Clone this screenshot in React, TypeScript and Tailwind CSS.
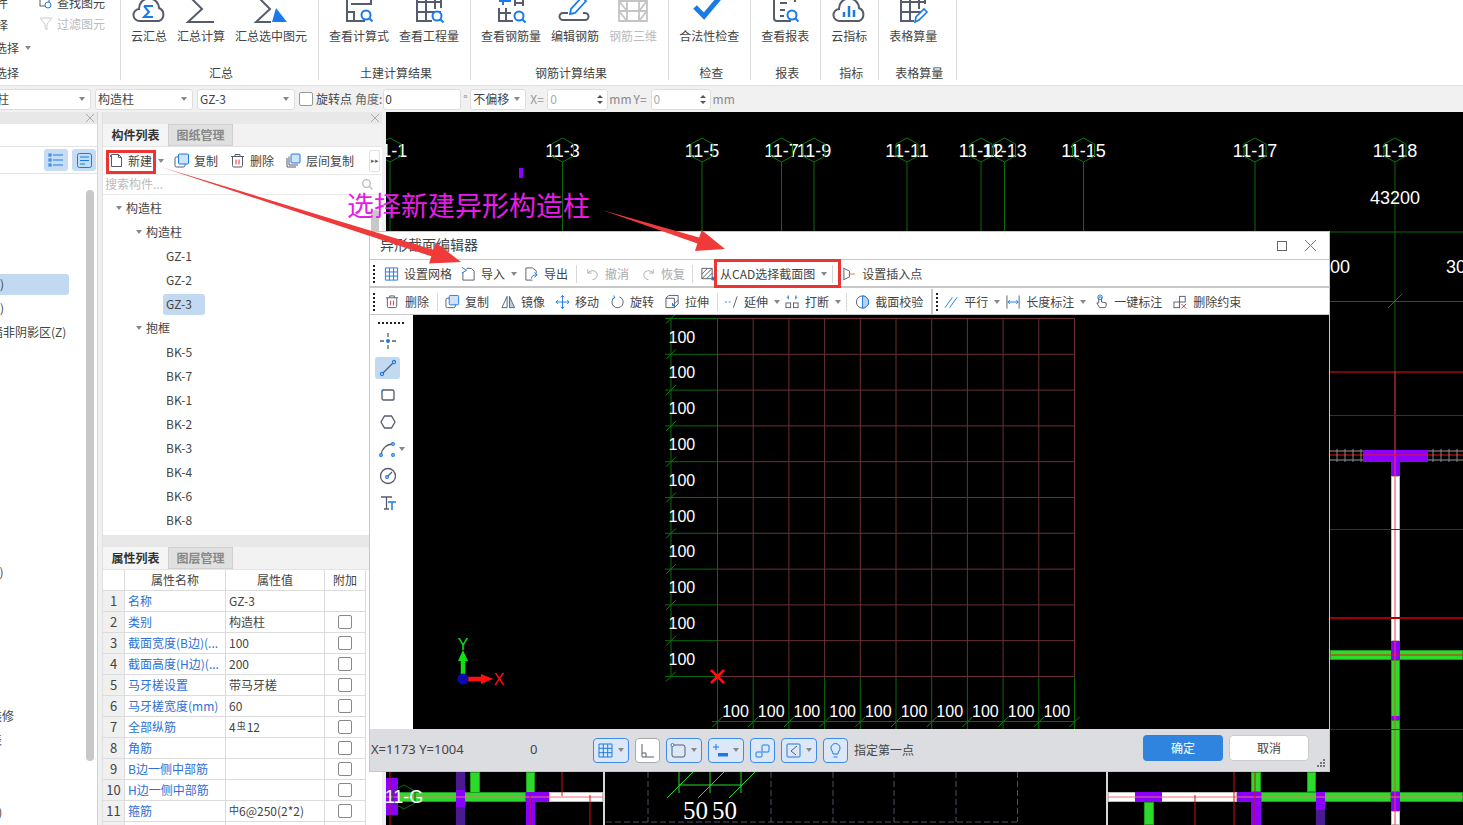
import type { ReactNode } from 'react';

const GRAY = '#565c6c';
const BLUE = '#1a7ae8';

function Caret({ className = '' }: { className?: string }) {
  return (
    <span
      className={`inline-block w-0 h-0 shrink-0 border-x-[3px] border-t-[4px] border-x-transparent border-t-[#888] ${className}`}
    />
  );
}

function Grip({ className = '' }: { className?: string }) {
  return (
    <div className={`flex flex-col gap-[2px] w-[2px] shrink-0 ${className}`}>
      {[0, 1, 2, 3, 4].map((i) => (
        <span key={i} className="block w-[2px] h-[2px] bg-[#222]" />
      ))}
    </div>
  );
}

function Mag({ x, y }: { x: number; y: number }) {
  return (
    <g fill="none" stroke={BLUE} strokeWidth="2">
      <circle cx={x} cy={y} r="4.5" fill="#fff" />
      <path d={`M${x + 3} ${y + 3}l3.5 3.5`} />
    </g>
  );
}

function Cloud() {
  return (
    <path
      d="M9 21a6 6 0 0 1-1-12 10 10 0 0 1 20-1 7 7 0 0 1 0 13z"
      fill="none"
      stroke={GRAY}
      strokeWidth="2"
    />
  );
}

const ribbonIcons: Record<string, ReactNode> = {
  cloudSum: (
    <>
      <Cloud />
      <path d="M13 6h9M13 6l5 6-5 5h9" fill="none" stroke={BLUE} strokeWidth="2" />
    </>
  ),
  sum: <path d="M6 -4h24M6 -4l13 13L5 22h26" fill="none" stroke={GRAY} strokeWidth="2" />,
  sumSel: (
    <>
      <path d="M4 -4h20M4 -4l13 13L3 22h15" fill="none" stroke={GRAY} strokeWidth="2" />
      <path d="M23 8l11 14H19z" fill={BLUE} />
    </>
  ),
  calc: (
    <>
      <path d="M6 -4v25h18" fill="none" stroke={GRAY} strokeWidth="2" />
      <path d="M6 12h7v9" fill="none" stroke={GRAY} strokeWidth="2" />
      <path d="M12 4h16" stroke={BLUE} strokeWidth="2" strokeDasharray="3 2" />
      <path d="M30 -4v8H10" fill="none" stroke={GRAY} strokeWidth="2" />
      <Mag x={25} y={15} />
    </>
  ),
  table: (
    <>
      <path d="M6 -4v25h15M6 12h24M6 2h24M15 -4v25M24 -4v13M30 -4v12" fill="none" stroke={GRAY} strokeWidth="2" />
      <Mag x={26} y={16} />
    </>
  ),
  rebar: (
    <>
      <path d="M6 8v13h14M6 13h12M13 8v13M22 -4v10M30 -4v10M22 3h8" fill="none" stroke={GRAY} strokeWidth="2" />
      <path d="M6 1h12M10 -4v9" fill="none" stroke={BLUE} strokeWidth="2" />
      <Mag x={26} y={16} />
    </>
  ),
  edit: (
    <>
      <path d="M11 13H6a3.500 3.500 0 0 0 0 7h22a3.500 3.500 0 0 0 0-7h-2" fill="none" stroke={GRAY} strokeWidth="2" />
      <path d="M13 14l1-5 11-12 4 4-11 12z" fill="#fff" stroke={BLUE} strokeWidth="1.800" />
    </>
  ),
  ladder: (
    <path
      d="M4 -4v26M32 -4v26M12 -4v26M24 -4v26M4 1h28M4 11h28M4 21h28M4 1l8 10M32 1l-8 10M4 11l8 10M32 11l-8 10"
      fill="none"
      stroke="#c4c4c4"
      strokeWidth="1.800"
    />
  ),
  check: <path d="M4 7l9 9L30 -4" fill="none" stroke={BLUE} strokeWidth="5" />,
  report: (
    <>
      <path d="M7 -4v22a3 3 0 0 0 3 3h14M28 -4v6" fill="none" stroke={GRAY} strokeWidth="2" />
      <path d="M13 3h7M13 10h5M13 16h4" stroke={GRAY} strokeWidth="2" />
      <Mag x={25} y={15} />
    </>
  ),
  cloudBars: (
    <>
      <Cloud />
      <path d="M13 12v5M18 6v11M23 10v7" stroke={BLUE} strokeWidth="2.500" />
    </>
  ),
  tablePen: (
    <>
      <path d="M6 -4v25h13M6 12h20M6 2h24M15 -4v25M24 -4v13M30 -4v8" fill="none" stroke={GRAY} strokeWidth="2" />
      <path d="M20 22l1-5 8-8 3 3-8 8z" fill="#fff" stroke={BLUE} strokeWidth="1.600" />
    </>
  ),
};

const ribbonGroups = [
  {
    label: '汇总',
    shift: 'translate-x-[2px]',
    pad: 'pr-[11px]',
    items: [
      { icon: 'cloudSum', label: '云汇总' },
      { icon: 'sum', label: '汇总计算' },
      { icon: 'sumSel', label: '汇总选中图元' },
    ],
  },
  {
    label: '土建计算结果',
    shift: 'translate-x-[2px]',
    pad: 'pr-[11px]',
    items: [
      { icon: 'calc', label: '查看计算式' },
      { icon: 'table', label: '查看工程量' },
    ],
  },
  {
    label: '钢筋计算结果',
    shift: 'translate-x-[2px]',
    pad: 'pr-[11px]',
    items: [
      { icon: 'rebar', label: '查看钢筋量' },
      { icon: 'edit', label: '编辑钢筋' },
      { icon: 'ladder', label: '钢筋三维', disabled: true },
    ],
  },
  { label: '检查', shift: 'translate-x-[2px]', pad: 'pr-[11px]', items: [{ icon: 'check', label: '合法性检查' }] },
  { label: '报表', shift: 'translate-x-[2px]', pad: 'pr-[11px]', items: [{ icon: 'report', label: '查看报表' }] },
  { label: '指标', shift: 'translate-x-[2px]', pad: 'pr-[11px]', items: [{ icon: 'cloudBars', label: '云指标' }] },
  { label: '表格算量', shift: 'translate-x-[6px]', pad: 'pr-[19px]', items: [{ icon: 'tablePen', label: '表格算量' }] },
];

function Ribbon() {
  return (
    <div className="h-[85px] bg-white flex items-start overflow-hidden shrink-0">
      <div className="w-[121px] h-[80px] border-r border-[#dcdcdc] shrink-0 flex flex-col overflow-hidden">
        <div className="flex h-[66px]">
          <div className="w-[39px] shrink-0 leading-[16px]">
            <div className="-ml-[4px] mt-[-5px] h-[22px] whitespace-nowrap">件</div>
            <div className="-ml-[4px] h-[23px] whitespace-nowrap">择</div>
            <div className="-ml-[5px] flex items-center gap-[6px] whitespace-nowrap">
              选择
              <Caret />
            </div>
          </div>
          <div className="leading-[16px]">
            <div className="flex items-center gap-[4px] mt-[-8px] h-[21px]">
              <svg width="14" height="14" viewBox="0 0 14 14" fill="none">
                <rect x="1" y="1" width="9" height="9" stroke={GRAY} />
                <circle cx="9" cy="9" r="3" stroke={BLUE} fill="#fff" />
              </svg>
              <span>查找图元</span>
            </div>
            <div className="flex items-center gap-[4px] text-[#bbb] h-[21px]">
              <svg width="14" height="14" viewBox="0 0 14 14" fill="none" stroke="#ccc">
                <path d="M1 1h12L8 7v6L6 11V7z" />
              </svg>
              <span>过滤图元</span>
            </div>
          </div>
        </div>
        <div className="h-[13px] leading-[13px] -ml-[5px] whitespace-nowrap">选择</div>
      </div>
      {ribbonGroups.map((group) => (
        <div key={group.label} className={`h-[80px] border-r border-[#dcdcdc] flex flex-col items-center pl-[10px] shrink-0 ${group.pad}`}>
          <div className="flex gap-[10px] h-[66px]">
            {group.items.map((item) => (
              <div key={item.label} className="flex flex-col items-center">
                <svg width="36" height="23" viewBox="0 0 36 23">
                  {ribbonIcons[item.icon]}
                </svg>
                <span className={`mt-[5px] leading-[16px] whitespace-nowrap ${item.disabled ? 'text-[#bbb]' : ''}`}>
                  {item.label}
                </span>
              </div>
            ))}
          </div>
          <div className={`h-[13px] leading-[13px] whitespace-nowrap ${group.shift}`}>{group.label}</div>
        </div>
      ))}
    </div>
  );
}

function SelectBox({ text, className }: { text: string; className: string }) {
  return (
    <div className={`h-[21px] shrink-0 bg-white border border-[#dedede] rounded-[3px] flex items-center justify-between pr-[5px] ${className}`}>
      <span className="whitespace-nowrap leading-[17px] pb-[2px]">{text}</span>
      <Caret className="border-t-[#555]" />
    </div>
  );
}

function SpinBox({ className }: { className: string }) {
  return (
    <div className={`h-[21px] shrink-0 bg-white border border-[#dedede] rounded-[3px] flex items-center justify-between pl-[2px] pr-[4px] text-[#aaa] ${className}`}>
      <span className="leading-[17px] pb-[2px]">0</span>
      <div className="flex flex-col gap-[3px]">
        <span className="w-0 h-0 border-x-[3px] border-b-[3px] border-x-transparent border-b-[#555]" />
        <span className="w-0 h-0 border-x-[3px] border-t-[3px] border-x-transparent border-t-[#555]" />
      </div>
    </div>
  );
}

function OptionBar() {
  return (
    <div className="h-[27px] bg-[#f1f1f1] border-t border-[#e0e0e0] flex items-center shrink-0 overflow-hidden">
      <SelectBox text="柱" className="-ml-[20px] w-[111px] pl-[16px]" />
      <SelectBox text="构造柱" className="ml-[4px] w-[98px] pl-[2px]" />
      <SelectBox text="GZ-3" className="ml-[4px] w-[98px] pl-[2px]" />
      <span className="ml-[4px] w-[14px] h-[14px] bg-white border border-[#999] rounded-[2px] shrink-0" />
      <span className="ml-[3px] shrink-0 pb-[1px]">旋转点</span>
      <span className="ml-[3px] shrink-0 text-[#666] pb-[1px]">角度:</span>
      <div className="ml-[1px] w-[78px] h-[21px] bg-white border border-[#dedede] rounded-[3px] pl-[1px] leading-[17px] shrink-0">0</div>
      <span className="ml-[2px] w-[7px] text-[#888] shrink-0">°</span>
      <SelectBox text="不偏移" className="w-[56px] pl-[2px]" />
      <span className="ml-[4px] text-[#999] w-[17px] shrink-0 pb-[1px]">X=</span>
      <SpinBox className="w-[61px]" />
      <span className="ml-[1px] text-[#888] shrink-0 pb-[1px]">mm</span>
      <span className="ml-[2px] text-[#888] w-[17px] shrink-0 pb-[1px]">Y=</span>
      <SpinBox className="w-[60px]" />
      <span className="ml-[2px] text-[#888] shrink-0 pb-[1px]">mm</span>
    </div>
  );
}

const leftRows: Record<number, { text: string; offset: string; active?: boolean }> = {
  4: { text: '柱)', offset: '-ml-[12px]', active: true },
  5: { text: '柱)', offset: '-ml-[12px]' },
  6: { text: '墙非阴影区(Z)', offset: '-ml-[9px]' },
  16: { text: '(Y)', offset: '-ml-[11px]' },
  22: { text: '装修', offset: '-ml-[10px]' },
  23: { text: '表', offset: '-ml-[10px]' },
  26: { text: '(Z)', offset: '-ml-[13px]' },
};

function PanelBar() {
  return (
    <div className="h-[12px] bg-[#e8e8e8] flex items-center justify-end pr-[3px] shrink-0">
      <svg width="8" height="8" viewBox="0 0 8 8" stroke="#aaa">
        <path d="M0 0l8 8M8 0L0 8" />
      </svg>
    </div>
  );
}

function LeftPanel() {
  return (
    <div className="w-[98px] shrink-0 bg-white border-r border-[#d4d4d4] flex flex-col overflow-hidden">
      <PanelBar />
      <div className="h-[23px] border-b border-[#e4e4e4] shrink-0" />
      <div className="h-[27px] border-b border-[#e4e4e4] flex items-center justify-end gap-[4px] pr-[1px] shrink-0">
        <div className="w-[24px] h-[22px] rounded-[3px] bg-[#c5dcf3] flex items-center justify-center">
          <svg width="16" height="14" viewBox="0 0 16 14" stroke={BLUE} fill="none">
            <path d="M5 2h10M5 7h10M5 12h10" />
            <rect x="1" y="1" width="2" height="2" />
            <rect x="1" y="6" width="2" height="2" />
            <rect x="1" y="11" width="2" height="2" />
          </svg>
        </div>
        <div className="w-[24px] h-[22px] rounded-[3px] bg-[#c5dcf3] flex items-center justify-center">
          <svg width="15" height="15" viewBox="0 0 15 15" stroke={BLUE} fill="none">
            <rect x="0.500" y="0.500" width="14" height="14" rx="2" />
            <path d="M3 4h9M3 7.500h9M3 11h5" />
          </svg>
        </div>
      </div>
      <div className="flex flex-1 pt-[2px] min-h-0">
        <div className="w-[86px] shrink-0 overflow-hidden">
          {Array.from({ length: 27 }, (_, i) => {
            const row = leftRows[i];
            return (
              <div key={i} className="h-[24px] flex items-center">
                {row && (
                  <div className={`h-[21px] w-[69px] leading-[20px] whitespace-nowrap rounded-r-[3px] ${row.active ? 'bg-[#c2d9f2]' : ''}`}>
                    <span className={`inline-block ${row.offset}`}>{row.text}</span>
                  </div>
                )}
              </div>
            );
          })}
        </div>
        <div className="w-[8px] h-[571px] mt-[14px] bg-[#c8c8c8] rounded-[4px] shrink-0" />
      </div>
    </div>
  );
}

function DocIcon() {
  return (
    <svg width="15" height="15" viewBox="0 0 15 15" fill="none" stroke={GRAY} className="shrink-0">
      <path d="M2.500 1.500h7l3 3v9h-10z" />
      <path d="M9.500 1.500v3h3" />
      <path d="M1 2l2 2M3 2L1 4" stroke={BLUE} />
    </svg>
  );
}

function CopyIcon() {
  return (
    <svg width="15" height="15" viewBox="0 0 15 15" fill="none" className="shrink-0">
      <rect x="1" y="4" width="10" height="10" rx="1.500" stroke={GRAY} />
      <rect x="4.500" y="1" width="10" height="10" rx="1" fill="#cfe2f8" stroke={BLUE} />
    </svg>
  );
}

function TrashIcon() {
  return (
    <svg width="15" height="15" viewBox="0 0 15 15" fill="none" className="shrink-0">
      <path d="M1 3.500h13M5 3.500V1.500h5v2M2.500 3.500v9a1.500 1.500 0 0 0 1.500 1.500h7a1.500 1.500 0 0 0 1.500-1.500v-9" stroke={GRAY} />
      <path d="M6 6.500v5M9 6.500v5" stroke="#e03030" />
    </svg>
  );
}

function LayerCopyIcon() {
  return (
    <svg width="15" height="15" viewBox="0 0 15 15" fill="none" className="shrink-0">
      <path d="M1 5v9h9M3 3.500v8.500h9" stroke={GRAY} />
      <rect x="5" y="1" width="9" height="9" rx="1" fill="#cfe2f8" stroke={BLUE} />
    </svg>
  );
}

const treeRows = [
  { text: '构造柱', level: 1 },
  { text: '构造柱', level: 2 },
  { text: 'GZ-1', level: 3 },
  { text: 'GZ-2', level: 3 },
  { text: 'GZ-3', level: 3, active: true },
  { text: '抱框', level: 2 },
  { text: 'BK-5', level: 3 },
  { text: 'BK-7', level: 3 },
  { text: 'BK-1', level: 3 },
  { text: 'BK-2', level: 3 },
  { text: 'BK-3', level: 3 },
  { text: 'BK-4', level: 3 },
  { text: 'BK-6', level: 3 },
  { text: 'BK-8', level: 3 },
];

function Tabs({ first, second }: { first: string; second: string }) {
  return (
    <div className="h-[23px] flex bg-[#f2f2f2] shrink-0 border-b border-[#e4e4e4]">
      <div className="w-[65px] text-center font-bold leading-[22px] bg-[#f5f5f5] text-[#333]">{first}</div>
      <div className="w-[65px] text-center leading-[20px] bg-[#e0e0e0] border border-[#d0d0d0] text-[#888] font-bold">{second}</div>
    </div>
  );
}

const props = [
  ['名称', 'GZ-3', false],
  ['类别', '构造柱', true],
  ['截面宽度(B边)(...', '100', true],
  ['截面高度(H边)(...', '200', true],
  ['马牙槎设置', '带马牙槎', true],
  ['马牙槎宽度(mm)', '60', true],
  ['全部纵筋', 'bar', true],
  ['角筋', '', true],
  ['B边一侧中部筋', '', true],
  ['H边一侧中部筋', '', true],
  ['箍筋', 'stirrup', true],
  ['', '', false],
] as const;

function valueCell(value: string) {
  if (value === 'bar') {
    return (
      <>
        4<span className="text-[9px] relative -top-[3px] mx-[1px]">虫</span>12
      </>
    );
  }
  if (value === 'stirrup') {
    return (
      <>
        <span className="text-[10px] relative -top-[2px]">中</span>6@250(2*2)
      </>
    );
  }
  return value;
}

function MiddlePanel() {
  return (
    <div className="w-[280px] ml-[4px] shrink-0 bg-white flex flex-col overflow-hidden border-l border-[#e0e0e0]">
      <PanelBar />
      <Tabs first="构件列表" second="图纸管理" />
      <div className="h-[28px] flex items-center border-b border-[#eaeaea] shrink-0 whitespace-nowrap">
        <span className="ml-[6px] shrink-0"><DocIcon /></span>
        <span className="ml-[4px] shrink-0">新建</span>
        <Caret className="ml-[6px]" />
        <span className="ml-[10px] shrink-0"><CopyIcon /></span>
        <span className="ml-[5px] shrink-0">复制</span>
        <span className="ml-[12px] shrink-0"><TrashIcon /></span>
        <span className="ml-[5px] shrink-0">删除</span>
        <span className="ml-[12px] shrink-0"><LayerCopyIcon /></span>
        <span className="ml-[5px] shrink-0">层间复制</span>
        <div className="ml-[15px] w-[11px] h-[22px] shrink-0 border border-[#e0e0e0] rounded-[2px] flex items-center justify-center text-[7px] text-[#666]">▸▸</div>
      </div>
      <div className="h-[20px] flex items-center justify-between pl-[2px] pr-[9px] pb-[1px] text-[#bbb] border-b border-[#eaeaea] shrink-0">
        <span>搜索构件...</span>
        <svg width="11" height="11" viewBox="0 0 11 11" fill="none" stroke="#bbb" strokeWidth="1.300">
          <circle cx="4.500" cy="4.500" r="3.800" />
          <path d="M7.500 7.500l3 3" />
        </svg>
      </div>
      <div className="h-[340px] flex shrink-0 overflow-hidden">
        <div className="w-[268px] pt-[1px]">
          {treeRows.map((row, i) => (
            <div key={i} className="h-[24px] flex items-center">
              {row.level === 1 && <Caret className="ml-[13px] mr-[4px]" />}
              {row.level === 2 && <Caret className="ml-[33px] mr-[4px]" />}
              {row.level === 3 && (
                <span className={`ml-[60px] pl-[3px] h-[21px] w-[42px] leading-[19px] rounded-[3px] ${row.active ? 'bg-[#c2d9f2]' : ''}`}>
                  {row.text}
                </span>
              )}
              {row.level !== 3 && <span>{row.text}</span>}
            </div>
          ))}
        </div>
        <div className="w-[8px] h-[120px] mt-[15px] bg-[#c8c8c8] rounded-[4px]" />
      </div>
      <PanelBar />
      <Tabs first="属性列表" second="图层管理" />
      <div className="w-[263px] shrink-0 grid grid-cols-[22px_101px_99px_41px] auto-rows-[21px] text-[12px]">
        <div className="border-r border-b border-[#dcdcdc]" />
        <div className="border-r border-b border-[#dcdcdc] text-center leading-[20px]">属性名称</div>
        <div className="border-r border-b border-[#dcdcdc] text-center leading-[20px]">属性值</div>
        <div className="border-r border-b border-[#dcdcdc] text-center leading-[20px]">附加</div>
        {props.map(([name, value, hasCheck], i) => (
          <div key={i} className="contents">
            <div className="bg-[#f0f0f0] border-r border-b border-[#dcdcdc] text-center leading-[20px] text-[13px]">{i < 11 ? i + 1 : ''}</div>
            <div className="border-r border-b border-[#dcdcdc] pl-[3px] leading-[20px] text-[#2f6fd8] whitespace-nowrap overflow-hidden">{name}</div>
            <div className="border-r border-b border-[#dcdcdc] pl-[3px] leading-[20px] whitespace-nowrap overflow-hidden">{valueCell(value)}</div>
            <div className="border-r border-b border-[#dcdcdc] flex items-center justify-center">
              {hasCheck && <span className="w-[14px] h-[14px] border border-[#888] rounded-[2px]" />}
            </div>
          </div>
        ))}
      </div>
    </div>
  );
}

const bubbles: [number, string][] = [
  [390, '11-1'],
  [562.5, '11-3'],
  [702, '11-5'],
  [781.5, '11-7'],
  [814, '11-9'],
  [907, '11-11'],
  [981, '11-12'],
  [1004.5, '11-13'],
  [1083.5, '11-15'],
  [1255, '11-17'],
  [1395, '11-18'],
];

const GREEN = '#2bdc2b';
const PURPLE = '#8a00ff';
const DEEP = '#4a1a90';

const outline: Record<string, string> = {
  [GREEN]: '#1f9a1f',
  '#fff': '#bdbdbd',
};

const blocks: [number, number, number, number, string][] = [
  [519, 168, 4, 10, PURPLE],
  [1391, 476, 9, 165, '#fff'],
  [1391, 660, 9, 57, GREEN],
  [1391, 720, 9, 72, GREEN],
  [1391, 811, 9, 14, '#fff'],
  [1330, 650, 133, 10, GREEN],
  [1330, 792, 133, 10, GREEN],
  [1363, 450, 65, 12, PURPLE],
  [1391, 462, 9, 14, PURPLE],
  [1391, 641, 9, 19, PURPLE],
  [1391, 716, 9, 4, PURPLE],
  [1391, 792, 9, 19, PURPLE],
  // below the dialog, left part
  [398, 792, 128, 10, GREEN],
  [470, 772, 10, 21, GREEN],
  [526, 772, 9, 21, GREEN],
  [549, 792, 54, 10, '#fff'],
  [386, 778, 12, 37, PURPLE],
  [456, 772, 9, 18, DEEP],
  [456, 790, 9, 17, PURPLE],
  [456, 807, 9, 18, DEEP],
  [526, 792, 23, 10, PURPLE],
  [526, 802, 9, 23, PURPLE],
  // below the dialog, right part
  [1108, 792, 129, 10, '#fff'],
  [1135, 792, 27, 10, PURPLE],
  [1144, 802, 10, 23, GREEN],
  [1251, 772, 10, 20, GREEN],
  [1261, 792, 130, 10, GREEN],
  [1307, 772, 9, 20, GREEN],
  [1237, 792, 24, 10, PURPLE],
  [1251, 802, 10, 23, PURPLE],
  [1316, 792, 9, 18, PURPLE],
  [1316, 810, 9, 15, DEEP],
];

function hex(cx: number, cy: number) {
  return [
    [cx, cy - 12],
    [cx + 11, cy - 6],
    [cx + 11, cy + 6],
    [cx, cy + 12],
    [cx - 11, cy + 6],
    [cx - 11, cy - 6],
  ]
    .map((p) => p.join(','))
    .join(' ');
}

function DrawingCanvas() {
  return (
    <div className="flex-1 ml-[4px] bg-black min-w-0">
      <svg viewBox="386 112 1077 713" className="block w-full h-full font-['Liberation_Sans',sans-serif]">
        {blocks.map(([x, y, w, h, c], i) => (
          <rect key={i} x={x + 0.5} y={y + 0.5} width={w - 1} height={h - 1} fill={c} stroke={outline[c] ?? c} />
        ))}
        {bubbles.map(([x, label]) => (
          <g key={label}>
            <line x1={x} y1={162} x2={x} y2={232} stroke="#0a6a0a" />
            <text x={x} y={156.500} fill="#fff" fontSize="18" textAnchor="middle">
              {label}
            </text>
            <polygon points={hex(x, 150)} fill="none" stroke="#0a7a0a" />
          </g>
        ))}
        <text x={1395} y={204} fill="#fff" fontSize="18" textAnchor="middle">43200</text>
        <text x={1330} y={273} fill="#fff" fontSize="18">00</text>
        <text x={1446} y={273} fill="#fff" fontSize="18">30</text>
        <path d="M1330 232h133M1330 301.500h133M1395 232v140" stroke="#0a6a0a" fill="none" />
        <path d="M1388 308l14-14" stroke="#0a8a0a" />
        <path d="M1330 372h133M1330 655h133" stroke="#f01010" fill="none" />
        <path d="M1395 372v453" stroke="#f04040" />
        <path d="M1330 455h133" stroke="#f01010" />
        <path d="M1330 415.500h133M1330 529.500h133M1330 729.500h133" stroke="#a80000" fill="none" />
        <path d="M1330 618h133" stroke="#a00000" strokeWidth="2" />
        <path d="M1330 451h33M1330 460h33M1428 451h35M1428 460h35" stroke="#999" />
        {[1337, 1345, 1353, 1361, 1433, 1441, 1449, 1457].map((x) => (
          <line key={x} x1={x} y1={449} x2={x} y2={462} stroke="#888" />
        ))}
        <path d="M386 797h217M1108 797h355" stroke="#f07070" />
        <path d="M390 772v53M530 795v30M562 772v24M590 795v30M1195 795v30M1234 772v53M1255 772v53" stroke="#d01010" />
        <polygon points={hex(404, 797)} fill="none" stroke="#0a6a0a" />
        <text x={404} y={803} fill="#fff" fontSize="18" textAnchor="middle">11-G</text>
        <path d="M604 772v53M1107 772v53" stroke="#d8d8d8" strokeWidth="2" />
        <path d="M648 772v50M771 772v50M833 772v50M894 772v50M956 772v50M1017.500 772v50M606 822h412" stroke="#4a5060" strokeDasharray="6 3" fill="none" />
        <path d="M679 772v21M710 772v21M741 772v21M679 785h62M667 798l26-26M698 798l26-26M729 798l26-26" stroke={GREEN} fill="none" />
        <text x={683} y={819} fill="#fff" fontSize="25" fontFamily="Liberation Serif">50</text>
        <text x={712} y={819} fill="#fff" fontSize="25" fontFamily="Liberation Serif">50</text>
      </svg>
    </div>
  );
}

type ToolItem = { icon?: ReactNode; label?: string; ml: string; caret?: boolean; off?: boolean; sep?: boolean };

const s = (d: string, color = GRAY) => <path d={d} stroke={color} fill="none" />;

const ti: Record<string, ReactNode> = {
  grid: <>{s('M1.500 1.500h13v13h-13zM1.500 5.800h13M1.500 10.200h13M5.800 1.500v13M10.200 1.500v13', BLUE)}</>,
  imp: <>{s('M6 2h5l3 3v9.500H2V6')}{s('M1 1l5 3-5 3', BLUE)}</>,
  exp: <>{s('M2 1.500h7l4 3v3M2 1.500v13h7')}{s('M8 13c0-3 2-4 6-4M11 6.500l3 2.500-3 2.500', BLUE)}</>,
  undo: <>{s('M3 3v4h4M3 7c3-4 10-3 10 2 0 3-3 5-5 5', '#aaa')}</>,
  redo: <>{s('M13 3v4H9M13 7C10 3 3 4 3 9c0 3 3 5 5 5', '#aaa')}</>,
  hatch: <>{s('M2 2h11v11H2zM2 8l6-6M2 13L13 2M7 13l6-6')}<circle cx="14" cy="13" r="2" fill={BLUE} /></>,
  ins: <>{s('M2 1.500v13M2 2l6 3v6l-6 3')}{s('M7 8l7 0', '#e08040')}</>,
  trash: <>{s('M1 3.500h13M5 3.500V1.500h5v2M2.500 3.500v9a1.500 1.500 0 0 0 1.500 1.500h7a1.500 1.500 0 0 0 1.500-1.500v-9')}{s('M6 6.500v5M9 6.500v5', '#e03030')}</>,
  copy: <><rect x="1" y="4" width="10" height="10" rx="1.500" stroke={GRAY} fill="none" /><rect x="4.500" y="1" width="10" height="10" rx="1" fill="#cfe2f8" stroke={BLUE} /></>,
  mirror: <>{s('M6.500 2L1 14h5.500z')}<path d="M9 2l5.500 12H9z" fill="#b8d2ee" stroke={GRAY} /></>,
  move: <>{s('M8 1v14M1 8h14M6 3l2-2 2 2M6 13l2 2 2-2M3 6L1 8l2 2M13 6l2 2-2 2', BLUE)}</>,
  rotate: <>{s('M10 2.500A6 6 0 1 1 5 3')}{s('M4 1l1 2.500-2.500 1', BLUE)}</>,
  stretch: <>{s('M1 4h9v10H1zM1 4l3-3h10v9l-4 4')}{s('M8 12l6-6M11 12h-3v-3', BLUE)}</>,
  extend: <>{s('M1 8h2M5 8h2', BLUE)}{s('M10 14l4-12')}</>,
  brk: <><rect x="1" y="9" width="5" height="5" stroke={GRAY} fill="none" /><rect x="9" y="9" width="5" height="5" stroke={GRAY} fill="none" />{s('M2 3h2M11 3h2M3.500 1v4M11.500 1v4', BLUE)}</>,
  verify: <><circle cx="8" cy="8" r="6.500" stroke={GRAY} fill="none" /><path d="M8 1.500a6.500 6.500 0 0 1 0 13z" fill="#b8d2ee" stroke={BLUE} /></>,
  para: <>{s('M1 14L9 3M6 14L14 3', BLUE)}</>,
  dim: <>{s('M1 1v14M14 1v14')}{s('M2 8h11M4 6l-2 2 2 2M11 6l2 2-2 2', BLUE)}</>,
  hand: <>{s('M6 14L3 9h2V4a1.500 1.500 0 0 1 3 0v4l5 1v3l-1 2z')}<circle cx="6.500" cy="3" r="2.500" stroke={BLUE} fill="none" /></>,
  delc: <><rect x="1" y="8" width="6" height="6" stroke={GRAY} fill="none" /><rect x="7" y="2" width="6" height="6" stroke={GRAY} fill="none" />{s('M9 10l5 5M14 10l-5 5', '#e03030')}</>,
};

const row1: ToolItem[] = [
  { icon: ti.grid, label: '设置网格', ml: 'ml-[9px]' },
  { icon: ti.imp, label: '导入', ml: 'ml-[9px]', caret: true },
  { icon: ti.exp, label: '导出', ml: 'ml-[7px]' },
  { sep: true, ml: 'ml-[8px]' },
  { icon: ti.undo, label: '撤消', ml: 'ml-[8px]', off: true },
  { icon: ti.redo, label: '恢复', ml: 'ml-[12px]', off: true },
  { sep: true, ml: 'ml-[7px]' },
  { icon: ti.hatch, label: '从CAD选择截面图', ml: 'ml-[7px]', caret: true },
  { sep: true, ml: 'ml-[5px]' },
  { icon: ti.ins, label: '设置插入点', ml: 'ml-[9px]' },
];

const row2: ToolItem[] = [
  { icon: ti.trash, label: '删除', ml: 'ml-[10px]' },
  { sep: true, ml: 'ml-[8px]' },
  { icon: ti.copy, label: '复制', ml: 'ml-[7px]' },
  { icon: ti.mirror, label: '镜像', ml: 'ml-[12px]' },
  { icon: ti.move, label: '移动', ml: 'ml-[10px]' },
  { icon: ti.rotate, label: '旋转', ml: 'ml-[11px]' },
  { icon: ti.stretch, label: '拉伸', ml: 'ml-[11px]' },
  { sep: true, ml: 'ml-[8px]' },
  { icon: ti.extend, label: '延伸', ml: 'ml-[6px]', caret: true },
  { icon: ti.brk, label: '打断', ml: 'ml-[5px]', caret: true },
  { sep: true, ml: 'ml-[5px]' },
  { icon: ti.verify, label: '截面校验', ml: 'ml-[8px]' },
];

const row2b: ToolItem[] = [
  { icon: ti.para, label: '平行', ml: 'ml-[6px]', caret: true },
  { icon: ti.dim, label: '长度标注', ml: 'ml-[6px]', caret: true },
  { icon: ti.hand, label: '一键标注', ml: 'ml-[8px]' },
  { icon: ti.delc, label: '删除约束', ml: 'ml-[11px]' },
];

function ToolRow({ items }: { items: ToolItem[] }) {
  return (
    <>
      {items.map((item, i) =>
        item.sep ? (
          <span key={i} className={`w-[1px] h-[18px] bg-[#d8d8d8] shrink-0 ${item.ml}`} />
        ) : (
          <div key={i} className={`flex items-center shrink-0 ${item.ml} ${item.off ? 'text-[#aaa]' : ''}`}>
            <svg width="15" height="16" viewBox="0 0 16 16" className="shrink-0">
              {item.icon}
            </svg>
            <span className="ml-[5px] whitespace-nowrap">{item.label}</span>
            {item.caret && <Caret className="ml-[6px]" />}
          </div>
        ),
      )}
    </>
  );
}

function SideTool({ children, active }: { children: ReactNode; active?: boolean }) {
  return (
    <div className={`w-[25px] h-[22px] ml-[5px] flex items-center justify-center rounded-[3px] mb-[5px] ${active ? 'bg-[#c2d9f2]' : ''}`}>
      <svg width="18" height="18" viewBox="0 0 18 18" fill="none" stroke={GRAY} strokeWidth="1.300">
        {children}
      </svg>
    </div>
  );
}

function SectionGrid() {
  const xs = Array.from({ length: 11 }, (_, i) => 717.5 + i * 35.7);
  const ys = Array.from({ length: 11 }, (_, i) => 318.5 + i * 35.8);
  return (
    <svg viewBox="413 315 916 414" className="block flex-1 h-[414px] bg-black font-['Liberation_Sans',sans-serif]">
      {xs.map((x) => (
        <g key={x}>
          <line x1={x} y1={318.5} x2={x} y2={676.5} stroke="#6b3035" />
          <line x1={x} y1={676.5} x2={x} y2={729} stroke="#0a6a0a" />
          <line x1={x - 5} y1={727} x2={x + 5} y2={717} stroke="#0a8a0a" />
        </g>
      ))}
      {ys.map((y) => (
        <g key={y}>
          <line x1={717.5} y1={y} x2={1074.5} y2={y} stroke="#6b3035" />
          <line x1={665} y1={y} x2={717.5} y2={y} stroke="#0a6a0a" />
          <line x1={666} y1={y + 5} x2={676} y2={y - 5} stroke="#0a8a0a" />
        </g>
      ))}
      <line x1={671} y1={318.5} x2={671} y2={676.5} stroke="#0a6a0a" />
      <line x1={712} y1={721.5} x2={1075} y2={721.5} stroke="#0a6a0a" />
      {ys.slice(0, 10).map((y) => (
        <text key={y} x={668.500} y={y + 24} fill="#fff" fontSize="16">100</text>
      ))}
      {xs.slice(0, 10).map((x) => (
        <text key={x} x={x + 18} y={717} fill="#fff" fontSize="16" textAnchor="middle">100</text>
      ))}
      <path d="M711 670l13 13M724 670l-13 13" stroke="#ff1010" strokeWidth="2.500" />
      <path d="M463 674v-14" stroke="#10e010" strokeWidth="4.500" />
      <path d="M458 661l5-11 5 11z" fill="#10e010" />
      <path d="M468 679h14" stroke="#ff1010" strokeWidth="4.500" />
      <path d="M481 674l12 5-12 5z" fill="#ff1010" />
      <circle cx="463" cy="679" r="5.500" fill="#0a0ab0" />
      <text x={463} y={650} fill="#10e010" fontSize="16" textAnchor="middle">Y</text>
      <text x={499} y={685} fill="#ff1010" fontSize="16" textAnchor="middle">X</text>
    </svg>
  );
}

function StatusBtn({ children, caret, plain, className }: { children: ReactNode; caret?: boolean; plain?: boolean; className: string }) {
  return (
    <div
      className={`h-[25px] shrink-0 rounded-[4px] border flex items-center px-[3px] gap-[4px] ${
        plain ? 'border-[#aaa] bg-white' : 'border-[#3d8be6] bg-[#dce8f8]'
      } ${caret ? 'justify-between' : 'justify-center'} ${className}`}
    >
      <svg width="17" height="17" viewBox="0 0 17 17" fill="none" stroke={GRAY}>
        {children}
      </svg>
      {caret && <Caret className="mr-[1px] border-t-[#555]" />}
    </div>
  );
}

function Dialog() {
  return (
    <div className="absolute left-[369px] top-[231px] w-[961px] h-[541px] bg-white border border-[#c8c8c8] flex flex-col">
      <div className="h-[28px] border-b border-[#c8c8c8] flex items-center pl-[10px] pr-[13px] text-[14px] shrink-0">
        <span className="leading-[20px] pb-[4px]">异形截面编辑器</span>
        <svg width="10" height="10" viewBox="0 0 10 10" fill="none" stroke="#666" className="ml-auto">
          <rect x="0.500" y="0.500" width="9" height="9" />
        </svg>
        <svg width="11" height="11" viewBox="0 0 11 11" stroke="#777" className="ml-[18px]">
          <path d="M0 0l11 11M11 0L0 11" />
        </svg>
      </div>
      <div className="h-[28px] border-b-2 border-[#c8c8c8] flex items-center pl-[3px] pt-[1px] shrink-0">
        <Grip />
        <ToolRow items={row1} />
      </div>
      <div className="h-[27px] border-b border-[#c8c8c8] flex items-center pl-[3px] pt-[1px] shrink-0">
        <Grip />
        <ToolRow items={row2} />
        <span className="ml-[8px] w-[2px] h-[26px] bg-[#c8c8c8] shrink-0" />
        <Grip className="ml-[3px]" />
        <ToolRow items={row2b} />
      </div>
      <div className="flex h-[414px] shrink-0">
        <div className="w-[43px] shrink-0 bg-white pt-[7px]">
          <div className="ml-[8px] w-[26px] h-[2px] border-t-2 border-dotted border-[#222] mb-[6px]" />
          <SideTool>
            <path d="M1 9h4M13 9h4M9 1v4M9 13v4" />
            <circle cx="9" cy="9" r="2" fill={BLUE} stroke="none" />
          </SideTool>
          <SideTool active>
            <path d="M3 15L15 3" />
            <circle cx="3" cy="15" r="1.500" stroke={BLUE} fill="#fff" />
            <circle cx="15" cy="3" r="1.500" stroke={BLUE} fill="#fff" />
          </SideTool>
          <SideTool>
            <rect x="3" y="4" width="12" height="10" rx="1.500" />
            <circle cx="3.500" cy="4.500" r="1" fill={BLUE} stroke="none" />
            <circle cx="14.500" cy="13.500" r="1" fill={BLUE} stroke="none" />
          </SideTool>
          <SideTool>
            <path d="M5.500 3h7L16 9l-3.500 6h-7L2 9z" />
          </SideTool>
          <div className="flex items-center">
            <SideTool>
              <path d="M2 15C3 8 8 4 14 4" />
              <circle cx="2" cy="15" r="1.300" stroke={BLUE} fill="#fff" />
              <circle cx="14" cy="4" r="1.300" stroke={BLUE} fill="#fff" />
              <circle cx="14" cy="15" r="1.300" stroke={BLUE} fill="#fff" />
            </SideTool>
            <Caret className="-ml-[1px] mb-[5px]" />
          </div>
          <SideTool>
            <circle cx="9" cy="9" r="7.500" />
            <path d="M8 10l5-5" />
            <circle cx="8" cy="10" r="1.300" stroke={BLUE} fill="#fff" />
          </SideTool>
          <SideTool>
            <path d="M2 3h11M7.500 3v12M5 15h5" />
            <path d="M9 8h8M13 8v8" stroke={BLUE} strokeWidth="1.500" />
          </SideTool>
        </div>
        <SectionGrid />
      </div>
      <div className="relative flex-1 bg-[#dcdde0] flex items-center min-h-0">
        <span className="ml-[1px] w-[159px] text-[13px] text-[#444] shrink-0 font-['Noto_Sans',sans-serif]">X=1173 Y=1004</span>
        <span className="w-[63px] shrink-0 text-[13px] font-['Noto_Sans',sans-serif]">0</span>
        <StatusBtn caret className="w-[36px]">
          <path d="M2 2h13v13H2zM2 6.300h13M2 10.700h13M6.300 2v13M10.700 2v13" stroke={BLUE} />
        </StatusBtn>
        <StatusBtn plain className="ml-[6px] w-[25px]">
          <path d="M3 2v13h12M3 11h4v4" />
        </StatusBtn>
        <StatusBtn caret className="ml-[6px] w-[36px]">
          <rect x="2" y="3" width="13" height="12" rx="2" />
          <circle cx="2.500" cy="3" r="1.500" stroke={BLUE} fill="#fff" />
        </StatusBtn>
        <StatusBtn caret className="ml-[6px] w-[36px]">
          <path d="M1 5h6M4 2v6" stroke={BLUE} />
          <rect x="6" y="11" width="10" height="3.500" fill={BLUE} stroke="none" />
        </StatusBtn>
        <StatusBtn className="ml-[6px] w-[25px]">
          <rect x="2" y="10" width="6" height="5" rx="1" stroke={BLUE} />
          <rect x="8" y="3" width="7" height="7" rx="1" stroke={BLUE} />
        </StatusBtn>
        <StatusBtn caret className="ml-[6px] w-[36px]">
          <rect x="2" y="2" width="13" height="13" rx="1" stroke={BLUE} />
          <path d="M12 4L6 9l5 4" />
        </StatusBtn>
        <StatusBtn className="ml-[6px] w-[25px]">
          <path d="M6 12c0-3-2-3-2-6a4.500 4.500 0 0 1 9 0c0 3-2 3-2 6zM6.500 15h4" stroke={BLUE} />
        </StatusBtn>
        <span className="ml-[6px] w-[60px] shrink-0 whitespace-nowrap">指定第一点</span>
        <div className="ml-auto mr-[20px] flex gap-[6px] -mt-[5px]">
          <div className="w-[80px] h-[26px] rounded-[4px] bg-[#2f84e0] text-white text-center leading-[26px]">确定</div>
          <div className="w-[80px] h-[26px] rounded-[4px] bg-white border border-[#ccc] text-center leading-[24px]">取消</div>
        </div>
        <svg width="8" height="8" viewBox="0 0 8 8" fill="#777" className="absolute right-[4px] bottom-[4px]">
          <rect x="6" y="0" width="2" height="2" />
          <rect x="3" y="3" width="2" height="2" />
          <rect x="6" y="3" width="2" height="2" />
          <rect x="0" y="6" width="2" height="2" />
          <rect x="3" y="6" width="2" height="2" />
          <rect x="6" y="6" width="2" height="2" />
        </svg>
      </div>
    </div>
  );
}

export default function App() {
  return (
    <div className="relative w-[1463px] h-[825px] overflow-hidden bg-[#f0f0f0] text-[12px] text-[#444] flex flex-col font-['Noto_Sans_CJK_SC','Noto_Sans',sans-serif]">
      <Ribbon />
      <OptionBar />
      <div className="flex flex-1 min-h-0">
        <LeftPanel />
        <MiddlePanel />
        <DrawingCanvas />
      </div>
      <Dialog />
      <div className="absolute left-[106px] top-[150px] w-[50px] h-[24px] border-[3px] border-[#ee3333]" />
      <div className="absolute left-[714px] top-[259px] w-[127px] h-[29px] border-[3px] border-[#ee3333]" />
      <div className="absolute left-[347px] top-[185px] text-[27px] leading-[40px] text-[#e81ce8] whitespace-nowrap">选择新建异形构造柱</div>
      <svg viewBox="0 0 1463 825" className="absolute inset-0 w-full h-full pointer-events-none">
        <polygon points="161,167 433.400,249.700 435.700,242.500 461,262 429,263.500 431.300,256.300" fill="#f03a3a" />
        <polygon points="602,210 699.200,237.600 701.600,230 725,249 695,251 697.400,243.400" fill="#f03a3a" />
      </svg>
    </div>
  );
}
